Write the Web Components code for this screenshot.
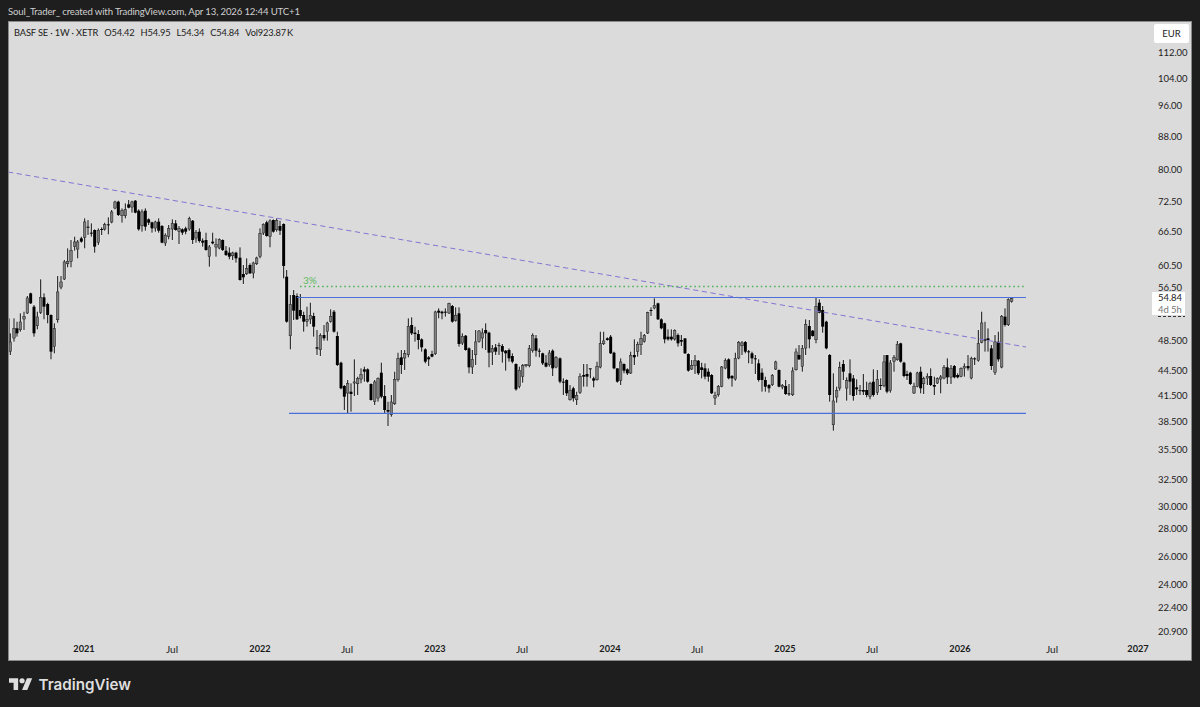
<!DOCTYPE html>
<html><head><meta charset="utf-8"><style>html,body{margin:0;height:100%;background:#1e1e1e}</style></head><body>
<tv-app>
<tv-header>Soul_Trader_ created with TradingView.com, Apr 13, 2026 12:44 UTC+1</tv-header>
<tv-chart></tv-chart>
<tv-footer></tv-footer>
</tv-app>
<script>
const F='Lato,"Liberation Sans",Arial,sans-serif';
class TvApp extends HTMLElement{constructor(){super();this.attachShadow({mode:'open'}).innerHTML=`<style>:host{display:flex;flex-direction:column;width:1200px;height:707px;background:#1e1e1e;overflow:hidden;font-family:${F}}</style><slot></slot>`}}
class TvHeader extends HTMLElement{constructor(){super();this.attachShadow({mode:'open'}).innerHTML=`<style>:host{display:flex;align-items:center;height:21px;padding:1px 8px 0;box-sizing:border-box;color:#cfcfcf;font:9.6px ${F};letter-spacing:-.15px;white-space:nowrap;flex:none}</style><slot></slot>`}}
class TvFooter extends HTMLElement{constructor(){super();this.attachShadow({mode:'open'}).innerHTML=`<style>:host{display:flex;align-items:center;gap:6px;flex:1;padding:0 0 0 9px;color:#dedede}
svg{width:23.5px;height:12px;fill:#dedede;flex:none}span{font:600 15.2px Inter,sans-serif}</style><svg viewBox="0 4 36 18"><path d="M14 22H7V11H0V4h14v18zM28 22h-8l7.5-18h8L28 22z"/><circle cx="20" cy="8" r="4"/></svg><span>TradingView</span>`}}
class TvLegend extends HTMLElement{constructor(){super();this.attachShadow({mode:'open'}).innerHTML=`<style>:host{display:flex;position:absolute;left:5px;top:5px;gap:6px;color:#222;font:9.3px ${F};letter-spacing:-.15px;white-space:nowrap}</style><span>BASF SE · 1W · XETR</span><span>O54.42</span><span>H54.95</span><span>L54.34</span><span>C54.84</span><span>Vol923.87&#8201;K</span>`}}
const PRICES=[["112.00",52],["104.00",78],["96.00",105],["88.00",136],["80.00",169],["72.50",201],["66.50",231],["60.50",265],["56.50",287],["48.500",340],["44.500",370],["41.500",395],["38.500",421],["35.500",449],["32.500",479],["30.000",506],["28.000",528],["26.000",556],["24.000",584],["22.400",607],["20.900",631]];
class PriceAxis extends HTMLElement{constructor(){super();const labels=PRICES.map(([t,y])=>`<span class="p" style="top:${y-22-5}px">${t}</span>`).join('');
this.attachShadow({mode:'open'}).innerHTML=`<style>:host{display:block;position:relative;width:41px;flex:none;color:#222;font:9.5px/12px ${F};letter-spacing:-.05px}
.p{position:absolute;left:8px}
.eur{position:absolute;left:4px;top:2px;width:35px;height:19px;box-sizing:border-box;background:#fff;border-radius:2px;display:flex;align-items:center;justify-content:center;color:#222}
.last{position:absolute;left:2px;top:270px;width:33px;height:23px;background:#fff;display:flex;flex-direction:column;align-items:flex-start;padding-left:6px;box-sizing:border-box;line-height:11.5px}
.last i{font-style:normal;color:#777}
.peek{position:absolute;left:8px;top:293.5px;width:27px;height:1px;background:repeating-linear-gradient(90deg,#333 0 3px,transparent 3px 5px)}</style>${labels}<div class="eur">EUR</div><div class="last"><span>54.84</span><i>4d 5h</i></div><div class="peek"></div>`}}
const TIMES=[["2021",84,1],["Jul",172],["2022",260,1],["Jul",347],["2023",435,1],["Jul",522],["2024",610,1],["Jul",697],["2025",785,1],["Jul",872],["2026",960,1],["Jul",1052],["2027",1138,1]];
class TimeAxis extends HTMLElement{constructor(){super();const l=TIMES.map(([t,x,b])=>`<span class="${b?'y':''}" style="left:${x-9}px">${t}</span>`).join('');
this.attachShadow({mode:'open'}).innerHTML=`<style>:host{display:block;position:relative;flex:1;color:#222;font:10px/12px ${F}}
span{position:absolute;top:11px;transform:translateX(-50%)}.y{font-weight:700;font-size:9.2px;color:#1a1a1a}</style>${l}`}}
const Z=[
[0,190,`24,378,385,465,490,1;31,430,455,485,495;42,385,415,445,455;51,395,415,430,440,1;61,370,395,420,425;72,365,378,388,420;82,318,323,370,372;92,308,310,340,342,1;102,345,350,430,440,1;112,365,380,408,418;122,268,322,368,372;132,310,322,350,388,1;143,338,342,375,400,1;153,373,375,485,508,1;163,400,415,470,490;173,258,305,390,398;183,258,275,292,298;193,210,215,268,270;203,175,213,222,232;213,150,180,215,232;224,140,155,170,182;233,150,155,178,205;244,140,145,155,158,1;254,85,95,143,175;264,90,110,112,135,1;274,100,128,130,140,1;284,118,120,170,188,1;295,115,120,158,165;305,112,117,120,135,1;314,98,103,118,122;325,82,103,105,133,1;335,60,65,97,100;345,32,35,55,58;355,32,35,75,78,1;366,55,60,78,98;376,40,58,78,85;386,30,43,53,55,1;396,32,35,52,68;406,30,32,68,70,1;416,58,62,118,122,1;426,58,65,108,125;436,55,62,110,122,1;446,85,88,98,105,1;456,95,97,115,128,1;466,92,95,115,125;476,85,95,122,128,1;486,105,108,158,160,1;496,130,135,160,168;506,105,115,140,148;517,88,100,118,150;527,90,100,120,122,1;537,108,115,125,162;547,115,118,128,135,1;557,110,115,125,133,1;568,80,85,118,122;578,90,92,150,162,1;588,120,127,145,158;598,115,125,153,158,1;608,145,152,158,170,1;618,128,150,180,182,1;628,165,170,200,230;638,128,155,160,163,1;648,145,162,172,200;658,145,148,175,178;668,148,150,180,183,1;678,168,182,195,198,1;688,172,188,200,208,1;698,185,188,198,210;708,185,188,205,218,1;720,172,203,270,272,1;730,225,252,262,282,1;740,205,235,252,255;750,220,225,250,252,1;760,215,218,250,265;770,200,203,222,225;780,115,130,200,205;790,100,102,130,135;800,92,97,138,140,1;810,88,92,140,172;820,88,90,125,128,1;830,85,90,120,125;840,92,108,122,135,1;851,100,102,228,265,1`],
[280,270,`20,0,20,155,158,1;31,75,103,198,238;41,60,75,122,150,1;51,70,78,148,150,1;61,72,120,138,145,1;71,125,135,155,185,1;81,110,148,155,170;91,98,135,148,162;101,128,138,170,200,1;111,180,232,236,255,1;121,190,195,240,258;132,165,195,205,212,1;142,155,158,185,212;152,118,138,155,158;162,120,125,185,188,1;172,185,198,285,288,1;183,275,278,355,358,1;193,345,348,380,420,1;203,330,340,370,430;213,340,365,372,425,1;223,268,335,340,378;233,320,325,342,375;243,295,312,328,340;253,290,298,305,335,1;263,295,298,335,338,1;273,340,342,390,392,1;284,330,335,395,405;294,322,325,385,395;304,278,308,380,385,1;314,345,378,420,432,1;324,395,420,425,468,1;334,375,395,435,440;344,305,328,402,405;354,248,265,330,335;364,240,262,285,312,1;374,240,250,265,300;385,145,168,255,262;395,142,165,190,195,1;405,170,188,192,215,1;415,180,192,210,238,1;425,205,208,232,245,1;436,235,238,275,280,1;446,258,262,268,288,1;456,242,252,260,262,1;466,122,125,252,255;476,115,122,128,145,1;486,122,125,130,148,1;496,115,125,128,140,1;507,98,100,130,132;517,105,108,155,158,1;527,112,135,152,155;537,112,130,222,230,1;547,190,198,220,225;557,195,197,240,242,1;567,232,235,292,310,1;577,240,268,292,312;587,180,215,255,285;597,180,182,215,218;607,175,188,205,235;617,160,180,190,240,1;627,185,188,248,292,1;637,225,235,247,285;647,222,232,245,255,1;657,218,225,228,255;667,222,228,245,278,1;677,240,242,250,302,1;687,235,240,265,275,1;697,250,258,275,280,1;708,280,282,358,362,1;718,290,300,350,355;728,282,285,320,338;738,282,283,288,292;748,225,235,288,292;758,190,195,242,248;768,195,205,242,260,1;778,235,242,245,262,1;788,248,250,280,285,1;798,255,278,290,292,1;808,240,248,285,290;818,238,242,295,318,1;828,258,262,292,295`],
[560,280,`0,232,235,305,310,1;10,295,305,308,345,1;20,298,300,340,348,1;30,315,330,360,362;40,320,325,355,365,1;50,335,345,360,375;60,280,288,338,342;71,252,285,290,320,1;81,252,282,290,320,1;91,265,265,268,295;101,290,295,302,322,1;111,245,258,300,302;121,155,190,262,265;131,155,182,192,195;142,172,175,180,182,1;152,165,170,220,222,1;162,215,218,265,268,1;172,265,265,305,308,1;182,235,245,302,315;192,250,252,272,280,1;202,265,268,280,285,1;212,215,225,280,282;223,178,225,232,255,1;233,185,192,215,230;243,155,175,195,225;253,162,165,185,188;263,95,97,160,162;273,82,90,93,108,1;283,55,75,85,88;294,68,70,118,120,1;304,115,118,145,148,1;314,128,130,178,190,1;324,148,170,178,182,1;334,148,170,178,182,1;344,148,150,178,182;354,160,165,190,200,1;364,165,180,185,198,1;375,175,175,220,222,1;385,220,222,272,275,1;395,240,255,268,270;405,225,240,258,282;415,240,242,280,285,1;425,248,262,270,295,1;435,250,265,290,298,1;445,265,275,290,305,1;455,282,285,340,342,1;465,335,345,355,375;475,315,318,345,350;485,258,260,320,322;496,235,240,265,268;506,235,238,295,298,1;516,285,288,295,320,1;526,218,235,298,302;536,183,186,235,238;546,183,188,198,225;556,183,186,215,220,1;566,210,214,216,250,1;576,215,220,235,252,1;586,225,235,238,282,1;596,238,250,300,305,1;606,265,278,300,335,1;616,290,300,320,335,1;627,312,315,325,338,1;637,282,285,315,318;647,242,245,268,270;657,268,270,320,322,1;667,312,315,322,328;677,300,318,342,345,1;687,312,340,342,348,1;698,262,272,345,348`],
[780,280,`48,205,215,270,272;57,195,225,238,240,1;67,195,205,260,275;77,118,132,205,225;88,120,138,178,205,1;98,150,152,168,170,1;108,52,78,180,190;118,58,68,98,100,1;128,78,90,140,158,1;139,122,125,205,208,1;149,222,225,345,365,1;160,280,362,435,452;170,320,330,352,368;179,245,262,325,332;190,240,252,275,300,1;200,292,300,325,362;210,238,280,305,345,1;220,285,295,348,362,1;230,298,322,328,345,1;240,315,330,332,345;250,282,330,335,345,1;260,305,330,345,352,1;270,305,310,350,358;280,268,305,345,350,1;292,270,298,338,345;302,295,315,318,330,1;312,225,245,318,322;321,225,225,335,340,1;331,240,248,332,338;342,225,232,245,275;352,183,192,240,242;362,188,190,245,248,1;372,245,248,288,292,1;381,272,282,288,300,1;391,275,278,312,315,1;402,308,318,340,342;412,275,278,320,322;422,260,275,325,340,1;431,290,295,312,342;442,280,288,295,315;452,265,288,315,318,1;463,290,315,320,345,1;472,292,295,310,312;482,285,290,298,340;492,255,262,295,298;502,235,262,292,312,1;513,255,265,292,312;523,255,258,292,295,1;533,280,285,292,295,1;543,262,265,290,292;553,250,258,265,290;564,225,258,265,272,1;574,230,235,295,298;584,232,235,238,255,1;595,150,190,242,245;605,95,128,188,190;615,125,178,182,215,1;624,145,175,180,215,1;634,195,205,258,270,1;645,165,185,278,285;655,155,185,238,245,1;665,105,108,262,265;675,85,110,135,140,1;685,55,58,135,138;695,52,55,65,68`]];
function candles(){let halo='',wick='',body='';const n=v=>+v.toFixed(2);
for(const [ox,oy,s] of Z){for(const c of s.split(';')){const [zx,a,b,d,e,k]=c.split(',').map(Number);
const x=ox+zx/3,hi=oy+a/3,t=oy+b/3,bt=oy+d/3,lo=oy+e/3,h=Math.max(bt-t,1);
halo+=`<rect x="${n(x-1)}" y="${n(hi-.5)}" width="2" height="${n(lo-hi+1)}"/><rect x="${n(x-2.2)}" y="${n(t-.6)}" width="4.4" height="${n(h+1.2)}"/>`;
wick+=`<rect x="${n(x-.5)}" y="${n(hi)}" width="1" height="${n(lo-hi)}"/>`;
body+=k?`<rect x="${n(x-1.5)}" y="${n(t)}" width="3" height="${n(h)}" fill="#000"/>`:`<rect x="${n(x-1.25)}" y="${n(t+.25)}" width="2.5" height="${n(Math.max(h-.5,.6))}" fill="#808080" stroke="#222" stroke-width=".55"/>`;
}}return `<g fill="#f2f2f2" opacity=".55">${halo}</g><g fill="#111">${wick}</g><g>${body}</g>`}
class CandlePlot extends HTMLElement{constructor(){super();this.attachShadow({mode:'open'}).innerHTML=`<style>:host{display:block;flex:none;width:1141px;height:610px}svg{display:block}text{font:10px ${F};fill:#5cb85c}</style>
<svg width="1141" height="610" viewBox="9 22 1141 610">
${candles()}
<line x1="8" y1="172" x2="1026" y2="347" stroke="#8673d2" stroke-width="1" stroke-dasharray="5.2 3.6"/>
<line x1="297" y1="297.5" x2="1026" y2="297.5" stroke="#4a6fd8" stroke-width="1"/>
<line x1="289" y1="413.4" x2="1026" y2="413.4" stroke="#4a6fd8" stroke-width="1.2"/>
<line x1="300" y1="286.5" x2="1026" y2="286.5" stroke="#4fb35a" stroke-width="1.4" stroke-dasharray="1.6 2.83"/>
<text x="303" y="283.5">3%</text>
</svg>`}}
class TvChart extends HTMLElement{constructor(){super();this.attachShadow({mode:'open'}).innerHTML=`<style>:host{display:flex;position:relative;margin:0 8px;height:640px;box-sizing:border-box;border:1px solid #8a8a8a;background:#dbdbdb;flex:none;overflow:hidden}
.l{display:flex;flex-direction:column;flex:1;min-width:0}</style><div class="l"><candle-plot></candle-plot><time-axis></time-axis></div><price-axis></price-axis><tv-legend></tv-legend>`}}
for(const [n,c] of Object.entries({'tv-app':TvApp,'tv-header':TvHeader,'tv-footer':TvFooter,'tv-legend':TvLegend,'price-axis':PriceAxis,'time-axis':TimeAxis,'candle-plot':CandlePlot,'tv-chart':TvChart}))customElements.define(n,c);
</script></body></html>
